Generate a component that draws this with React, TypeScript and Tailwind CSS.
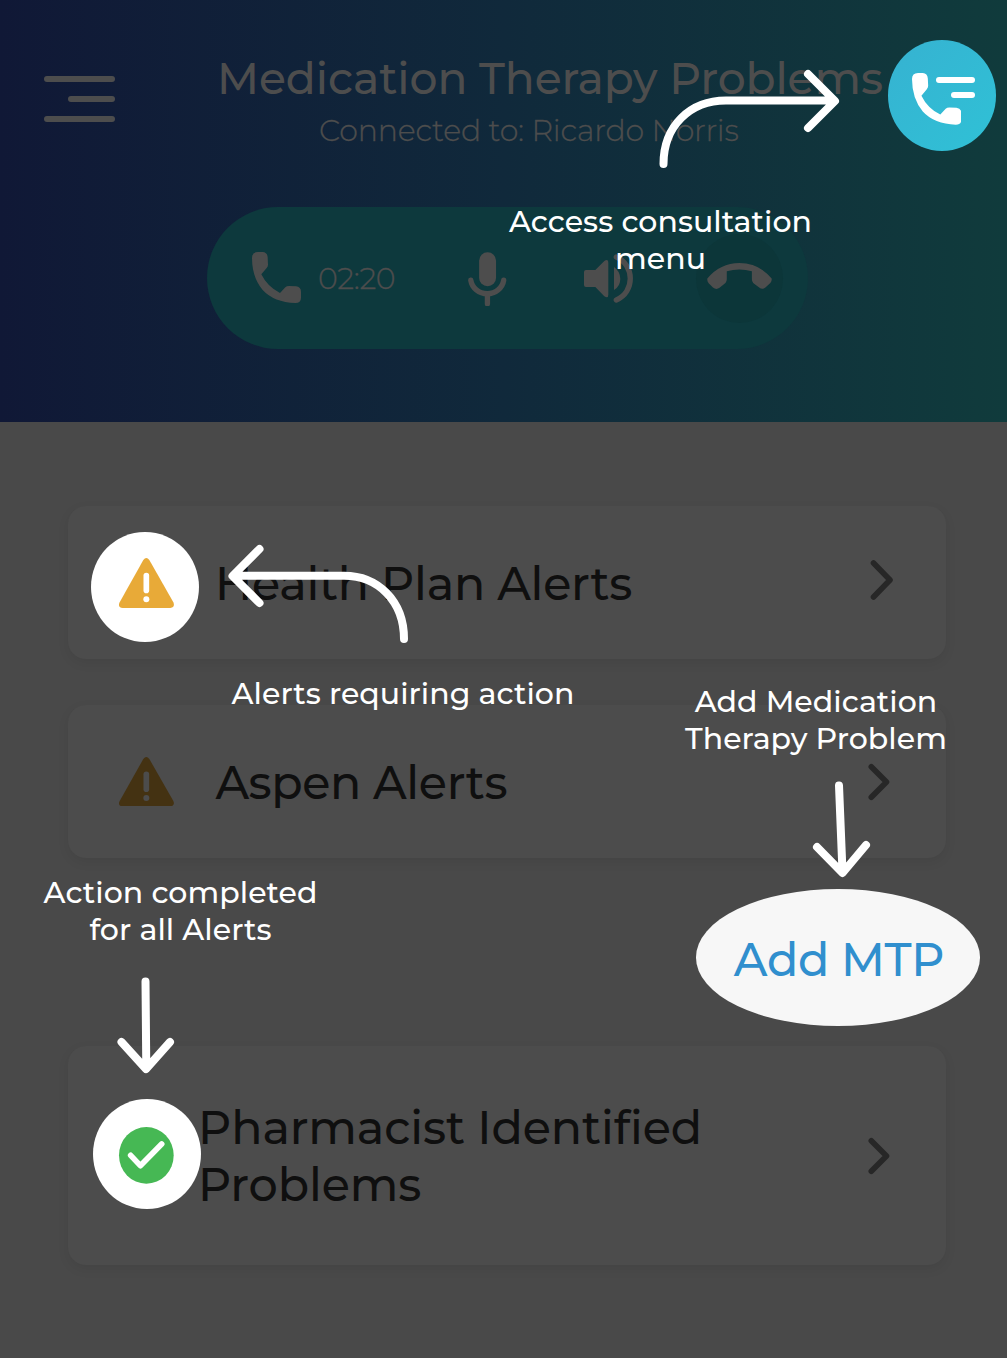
import React from "react";

const PHONE =
  "M156 204Q156 186 174 186L188 186Q202 187 203 202L204 224Q204 230 200 234L184 253Q202 290 240 309L256 292Q260 288 267 288L288 289Q303 291 303 305L303 323Q303 339 286 339Q222 337 188 300Q156 262 156 204Z";

function Phone({ className }: { className: string }) {
  return (
    <svg viewBox="156 186 147 153" preserveAspectRatio="none" className={className} fill="currentColor">
      <path d={PHONE} />
    </svg>
  );
}

function Warning({ className, mark }: { className: string; mark: string }) {
  return (
    <svg viewBox="0 0 165 150" preserveAspectRatio="none" className={className}>
      <path
        d="M73 6Q82 -6 91 6L163 133Q169 148 154 150L11 150Q-5 148 2 133Z"
        fill="currentColor"
      />
      <rect x="73.5" y="44" width="17" height="62" rx="8.5" fill={mark} />
      <circle cx="82" cy="124" r="9" fill={mark} />
    </svg>
  );
}

function Chevron({ className, d }: { className: string; d: string }) {
  return (
    <svg
      viewBox="0 0 24 42"
      className={className}
      fill="none"
      stroke="#272727"
      strokeWidth="5.6"
      strokeLinecap="round"
      strokeLinejoin="round"
    >
      <path d={d} />
    </svg>
  );
}

const CARD =
  "flex items-center rounded-[18px] bg-[#4c4c4c] pr-[52px] shadow-[0_4px_12px_rgba(0,0,0,0.07)]";
const HEADING = "text-[46px] leading-[57.5px] font-medium text-[#0f0f0f]";

function CallBar() {
  return (
    <div className="ml-[207px] flex h-[142px] w-[601px] items-center rounded-full bg-[#0d393d] pl-[45px] pr-[25px] text-[#4d4d4d]">
      <Phone className="mt-[-2px] h-[51px] w-[49px]" />
      <span className="ml-[17px] w-[80px] text-[30px] font-light tracking-[-0.4px] whitespace-nowrap [-webkit-text-stroke:0.3px_#4d4d4d]">
        02:20
      </span>
      <svg viewBox="804 185 115 164" className="mt-[2px] ml-[70px] h-[54.5px] w-[38.5px]" fill="currentColor">
        <rect x="837" y="186" width="51" height="102" rx="25.5" />
        <path
          d="M812 270A50 47 0 0 0 911 270M862 317V341"
          fill="none"
          stroke="currentColor"
          strokeWidth="16"
          strokeLinecap="round"
        />
      </svg>
      <svg viewBox="252 193 148 148" className="mt-[2px] ml-[77px] h-[49.3px] w-[49.3px]" fill="currentColor">
        <path d="M258 241H286L313 214Q325 206 325 220V315Q325 328 313 320L286 292H258Q252 292 252 286V247Q252 241 258 241Z" />
        <path d="M342 232Q361 245 361 268Q361 290 342 301Z" />
        <path
          d="M349 202C405 226 405 308 349 331"
          fill="none"
          stroke="currentColor"
          strokeWidth="16"
          strokeLinecap="round"
        />
      </svg>
      <div className="ml-auto flex h-[89px] w-[87px] items-center justify-center rounded-[50%] bg-[#0c3639]">
        <svg viewBox="620 219 197 79" className="mt-[-3px] mr-[1px] h-[26.3px] w-[65px]" fill="currentColor">
          <path d="M621 266Q660 219 718 219Q778 219 816 266Q817 273 812 279L797 293Q788 301 778 293L760 279Q756 275 756 268V244Q718 232 680 244V268Q680 275 676 279L658 294Q648 301 638 293L625 280Q620 273 621 266Z" />
        </svg>
      </div>
    </div>
  );
}

function CoachMarks() {
  const note =
    "absolute text-center text-[30px] leading-[37px] font-medium tracking-[0.05px] whitespace-nowrap text-white";
  return (
    <div className="absolute inset-0">
      <div className="absolute left-[888px] top-[40.3px] h-[110.7px] w-[108px] rounded-[50%] bg-linear-to-br from-[#36b2d1] to-[#2fc1d6] text-white">
        <Phone className="absolute left-[23.5px] top-[32.7px] h-[51.7px] w-[49.5px]" />
        <div className="absolute left-[48px] top-[36.7px] h-[6px] w-[38.5px] rounded-full bg-white" />
        <div className="absolute left-[62.5px] top-[51.7px] h-[6px] w-[24px] rounded-full bg-white" />
      </div>

      <div className="absolute left-[91px] top-[531.8px] flex h-[110.5px] w-[108px] items-center justify-center rounded-[50%] bg-white text-[#e8aa38]">
        <Warning className="ml-[2.5px] mt-[-8px] h-[50px] w-[55px]" mark="#ffffff" />
      </div>

      <div className="absolute left-[92.5px] top-[1098.7px] flex h-[110.5px] w-[108px] items-center justify-center rounded-[50%] bg-white">
        <svg viewBox="267 502 164 170" className="mt-[3.4px] h-[56.7px] w-[54.7px] overflow-visible">
          <ellipse cx="349" cy="587" rx="82" ry="85" fill="#46b854" />
          <path
            d="M302 587L331 618L395 553"
            fill="none"
            stroke="#ffffff"
            strokeWidth="17"
            strokeLinecap="round"
            strokeLinejoin="round"
          />
        </svg>
      </div>

      <div className="absolute left-[696px] top-[889px] flex h-[136.5px] w-[284px] items-center justify-center rounded-[50%] bg-[#f7f7f7]">
        <span className="mt-[5px] ml-[2px] text-[46px] leading-[57px] font-medium tracking-[-0.35px] whitespace-nowrap text-[#308fce]">
          Add MTP
        </span>
      </div>

      <svg
        viewBox="0 0 1007 1358"
        className="absolute inset-0 h-[1358px] w-[1007px]"
        fill="none"
        stroke="#ffffff"
        strokeWidth="8"
        strokeLinecap="round"
        strokeLinejoin="round"
      >
        <path d="M663.5 164C663.5 126 690 100.5 726 100.5H834M808 74L835 101L808 128" />
        <path d="M404 639C404 601 378 575.7 344 575.7H234M259.5 549L232.5 576L259.5 603" />
        <path d="M839 785.5L842.5 872M817 847L842.5 873L866 845" />
        <path d="M145.5 981.5L146.3 1068M121.5 1042L146 1069L170 1042" />
      </svg>

      <p className={`${note} left-[460.5px] top-[203px] w-[400px]`}>
        Access consultation
        <br />
        menu
      </p>
      <p className={`${note} left-[203px] top-[675px] w-[400px]`}>Alerts requiring action</p>
      <p className={`${note} left-[616px] top-[683px] w-[400px]`}>
        Add Medication
        <br />
        Therapy Problem
      </p>
      <p className={`${note} left-[-19.5px] top-[874px] w-[400px]`}>
        Action completed
        <br />
        for all Alerts
      </p>
    </div>
  );
}

export default function App() {
  return (
    <div className="relative h-[1358px] w-[1007px] overflow-hidden bg-[#494949] font-['Montserrat','Inter',sans-serif]">
      <header className="h-[422px] bg-linear-to-r from-[#101836] via-[#10293b] to-[#103b3c] text-[#4d4d4d]">
        <div className="flex h-[207px] items-start">
          <div className="ml-[44px] mt-[76px] flex w-[71px] flex-col items-end gap-[14px]">
            <div className="h-[6px] w-full rounded-full bg-current" />
            <div className="h-[6px] w-[47px] rounded-full bg-current" />
            <div className="h-[6px] w-full rounded-full bg-current" />
          </div>
          <div className="ml-[102px] mt-[51px] whitespace-nowrap">
            <h1 className="text-[44px] leading-[54px] font-medium tracking-[-0.08px]">Medication Therapy Problems</h1>
            <p className="ml-[102px] mt-[7px] text-[30px] leading-[37px] font-light tracking-[-0.19px] [-webkit-text-stroke:0.3px_#4d4d4d]">
              Connected to: Ricardo Norris
            </p>
          </div>
        </div>
        <CallBar />
      </header>

      <main className="flex flex-col pl-[68px] pr-[61px] pt-[84px]">
        <section className={`${CARD} h-[153px] pl-[147px]`}>
          <h2 className={`${HEADING} mt-[2px] tracking-[-0.24px]`}>Health Plan Alerts</h2>
          <Chevron className="mt-[-5px] ml-auto h-[42px] w-[24px]" d="M3.5 4L20 21L3.5 38" />
        </section>
        <section className={`${CARD} mt-[46px] h-[153px] pl-[50.5px]`}>
          <Warning className="h-[49.5px] w-[55px] text-[#443212]" mark="#4c4c4c" />
          <h2 className={`${HEADING} mt-[2px] ml-[42px] tracking-[-0.36px]`}>Aspen Alerts</h2>
          <Chevron className="mr-[2px] ml-auto h-[42px] w-[24px]" d="M3.3 5.7L18.5 21L3.3 36.3" />
        </section>
        <section className={`${CARD} mt-[188px] h-[219px] pl-[130px]`}>
          <h2 className={`${HEADING} mt-[1px] tracking-[-0.07px]`}>
            Pharmacist Identified
            <br />
            Problems
          </h2>
          <Chevron className="mr-[2px] ml-auto h-[42px] w-[24px]" d="M3.3 5.7L18.5 21L3.3 36.3" />
        </section>
      </main>

      <CoachMarks />
    </div>
  );
}
